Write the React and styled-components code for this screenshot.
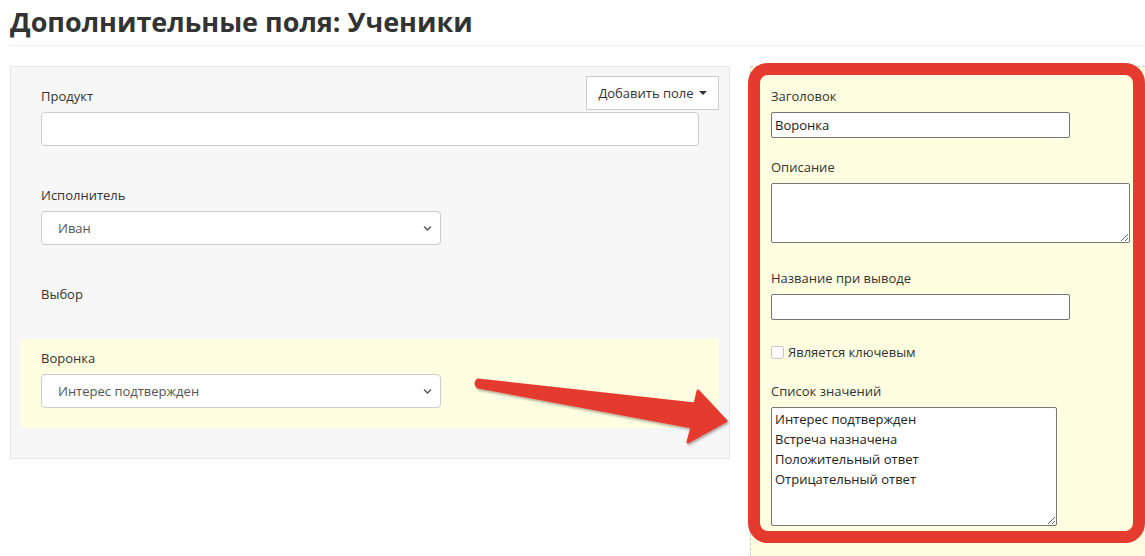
import React from 'react';
import styled, { createGlobalStyle } from 'styled-components';
import { FaChevronDown } from 'react-icons/fa';

const GlobalStyle = createGlobalStyle`
  body {
    margin: 0;
    background: #fff;
    font-family: "Open Sans", "Liberation Sans", sans-serif;
    color: #333;
    overflow: hidden;
  }
  * {
    box-sizing: border-box;
  }
`;

const Page = styled.div`
  position: relative;
  padding-left: 10px;
  min-height: 556px;
`;

const Title = styled.h1`
  margin: 0;
  padding: 4px 0 5px;
  font-size: 27px;
  line-height: 36px;
  font-weight: 700;
  color: #333;
  border-bottom: 1px solid #eee;
`;

const Main = styled.div`
  display: flex;
  align-items: flex-start;
  gap: 20px;
  margin-top: 20px;
`;

const LeftPanel = styled.div`
  width: 720px;
  flex-shrink: 0;
  padding: 10px 10px 20px;
  background: #f7f7f7;
  border: 1px solid #e6e6e6;
`;

const AddButton = styled.button`
  float: right;
  margin-top: -1px;
  height: 34px;
  width: 133px;
  padding: 0 10px;
  display: flex;
  align-items: center;
  justify-content: center;
  gap: 5px;
  background: #fff;
  border: 1px solid #ccc;
  border-radius: 0;
  font-family: inherit;
  font-size: 13px;
  color: #333;

  &::after {
    content: '';
    border-top: 4px solid #333;
    border-left: 4px solid transparent;
    border-right: 4px solid transparent;
  }
`;

const Field = styled.div`
  padding: 10px 20px 20px;
  margin-bottom: 10px;
  background: ${props => (props.$highlight ? '#fffee0' : 'transparent')};
`;

const Label = styled.label`
  display: block;
  font-size: 13px;
  line-height: 18px;
  color: #333;
  margin-bottom: 7px;
`;

const TextInput = styled.input`
  display: block;
  width: 658px;
  height: 34px;
  padding: 0 12px;
  background: #fff;
  border: 1px solid #ccc;
  border-radius: 4px;
  font-family: inherit;
  font-size: 13px;
`;

const SelectWrap = styled.div`
  position: relative;
  width: 400px;

  svg {
    position: absolute;
    right: 9px;
    top: 13px;
    width: 9px;
    height: 9px;
    color: #555;
    pointer-events: none;
  }
`;

const Select = styled.select`
  display: block;
  width: 100%;
  height: 34px;
  padding: 0 16px;
  appearance: none;
  background: #fff;
  border: 1px solid #ccc;
  border-radius: 4px;
  font-family: inherit;
  font-size: 13px;
  color: #555;
`;

const EmptyOptions = styled.div`
  margin-top: -1px;
`;

const RightColumn = styled.div`
  flex: 1;
  min-height: 490px;
  background: #fffee0;
  border-top: 1px dashed #ccc;
  border-left: 1px dashed #ccc;
`;

const Frame = styled.div`
  width: 397px;
  margin: -4px 0 0 -3px;
  padding: 12px 11px 5px;
  border: 12px solid #e53b2f;
  border-radius: 20px;
`;

const RField = styled.div`
  margin-bottom: ${props => props.$gap || 0}px;
`;

const RInput = styled.input`
  display: block;
  width: 299px;
  height: 26px;
  padding: 0 3px;
  background: #fff;
  border: 1px solid #767676;
  border-radius: 2px;
  font-family: inherit;
  font-size: 13px;
  color: #222;
`;

const RTextarea = styled.textarea`
  display: block;
  width: ${props => props.$w}px;
  height: ${props => props.$h}px;
  padding: 1px 3px;
  background: #fff;
  border: 1px solid #767676;
  border-radius: 2px;
  font-family: inherit;
  font-size: 13px;
  line-height: 20px;
  color: #222;
  resize: vertical;
`;

const CheckRow = styled.label`
  display: flex;
  align-items: center;
  gap: 4px;
  height: 18px;
  font-size: 13px;
  color: #333;
`;

const Checkbox = styled.input`
  appearance: none;
  margin: 0;
  width: 13px;
  height: 13px;
  background: #fff;
  border: 1px solid #c4c4c4;
  border-radius: 3px;
`;

const ArrowLayer = styled.svg`
  position: absolute;
  left: 0;
  top: 0;
  pointer-events: none;
`;

function Arrow() {
  return (
    <ArrowLayer width="1145" height="556" viewBox="0 0 1145 556">
      <defs>
        <filter id="arrowShadow" x="-10%" y="-30%" width="120%" height="160%">
          <feDropShadow dx="1" dy="2" stdDeviation="1" floodColor="#000" floodOpacity="0.3" />
        </filter>
      </defs>
      <path
        d="M478 380 L695 404 L698 391 L726 421 L688 442 L692 427 L478 387 Q474 383.5 478 380 Z"
        fill="#e53b2f"
        stroke="#e53b2f"
        strokeWidth="3"
        strokeLinejoin="round"
        filter="url(#arrowShadow)"
      />
    </ArrowLayer>
  );
}

function App() {
  return (
    <Page>
      <GlobalStyle />
      <Title>Дополнительные поля: Ученики</Title>
      <Main>
        <LeftPanel>
          <AddButton type="button">Добавить поле</AddButton>
          <Field>
            <Label>Продукт</Label>
            <TextInput type="text" />
          </Field>
          <Field>
            <Label>Исполнитель</Label>
            <SelectWrap>
              <Select defaultValue="ivan">
                <option value="ivan">Иван</option>
              </Select>
              <FaChevronDown />
            </SelectWrap>
          </Field>
          <Field>
            <Label>Выбор</Label>
            <EmptyOptions />
          </Field>
          <Field $highlight>
            <Label>Воронка</Label>
            <SelectWrap>
              <Select defaultValue="1">
                <option value="1">Интерес подтвержден</option>
                <option value="2">Встреча назначена</option>
                <option value="3">Положительный ответ</option>
                <option value="4">Отрицательный ответ</option>
              </Select>
              <FaChevronDown />
            </SelectWrap>
          </Field>
        </LeftPanel>

        <RightColumn>
          <Frame>
            <RField $gap={20}>
              <Label>Заголовок</Label>
              <RInput type="text" defaultValue="Воронка" />
            </RField>
            <RField $gap={26}>
              <Label>Описание</Label>
              <RTextarea $w={359} $h={60} />
            </RField>
            <RField $gap={23}>
              <Label>Название при выводе</Label>
              <RInput type="text" />
            </RField>
            <RField $gap={21}>
              <CheckRow>
                <Checkbox type="checkbox" />
                Является ключевым
              </CheckRow>
            </RField>
            <RField>
              <Label>Список значений</Label>
              <RTextarea
                $w={286}
                $h={119}
                defaultValue={'Интерес подтвержден\nВстреча назначена\nПоложительный ответ\nОтрицательный ответ'}
              />
            </RField>
          </Frame>
        </RightColumn>
      </Main>
      <Arrow />
    </Page>
  );
}

export default App;
